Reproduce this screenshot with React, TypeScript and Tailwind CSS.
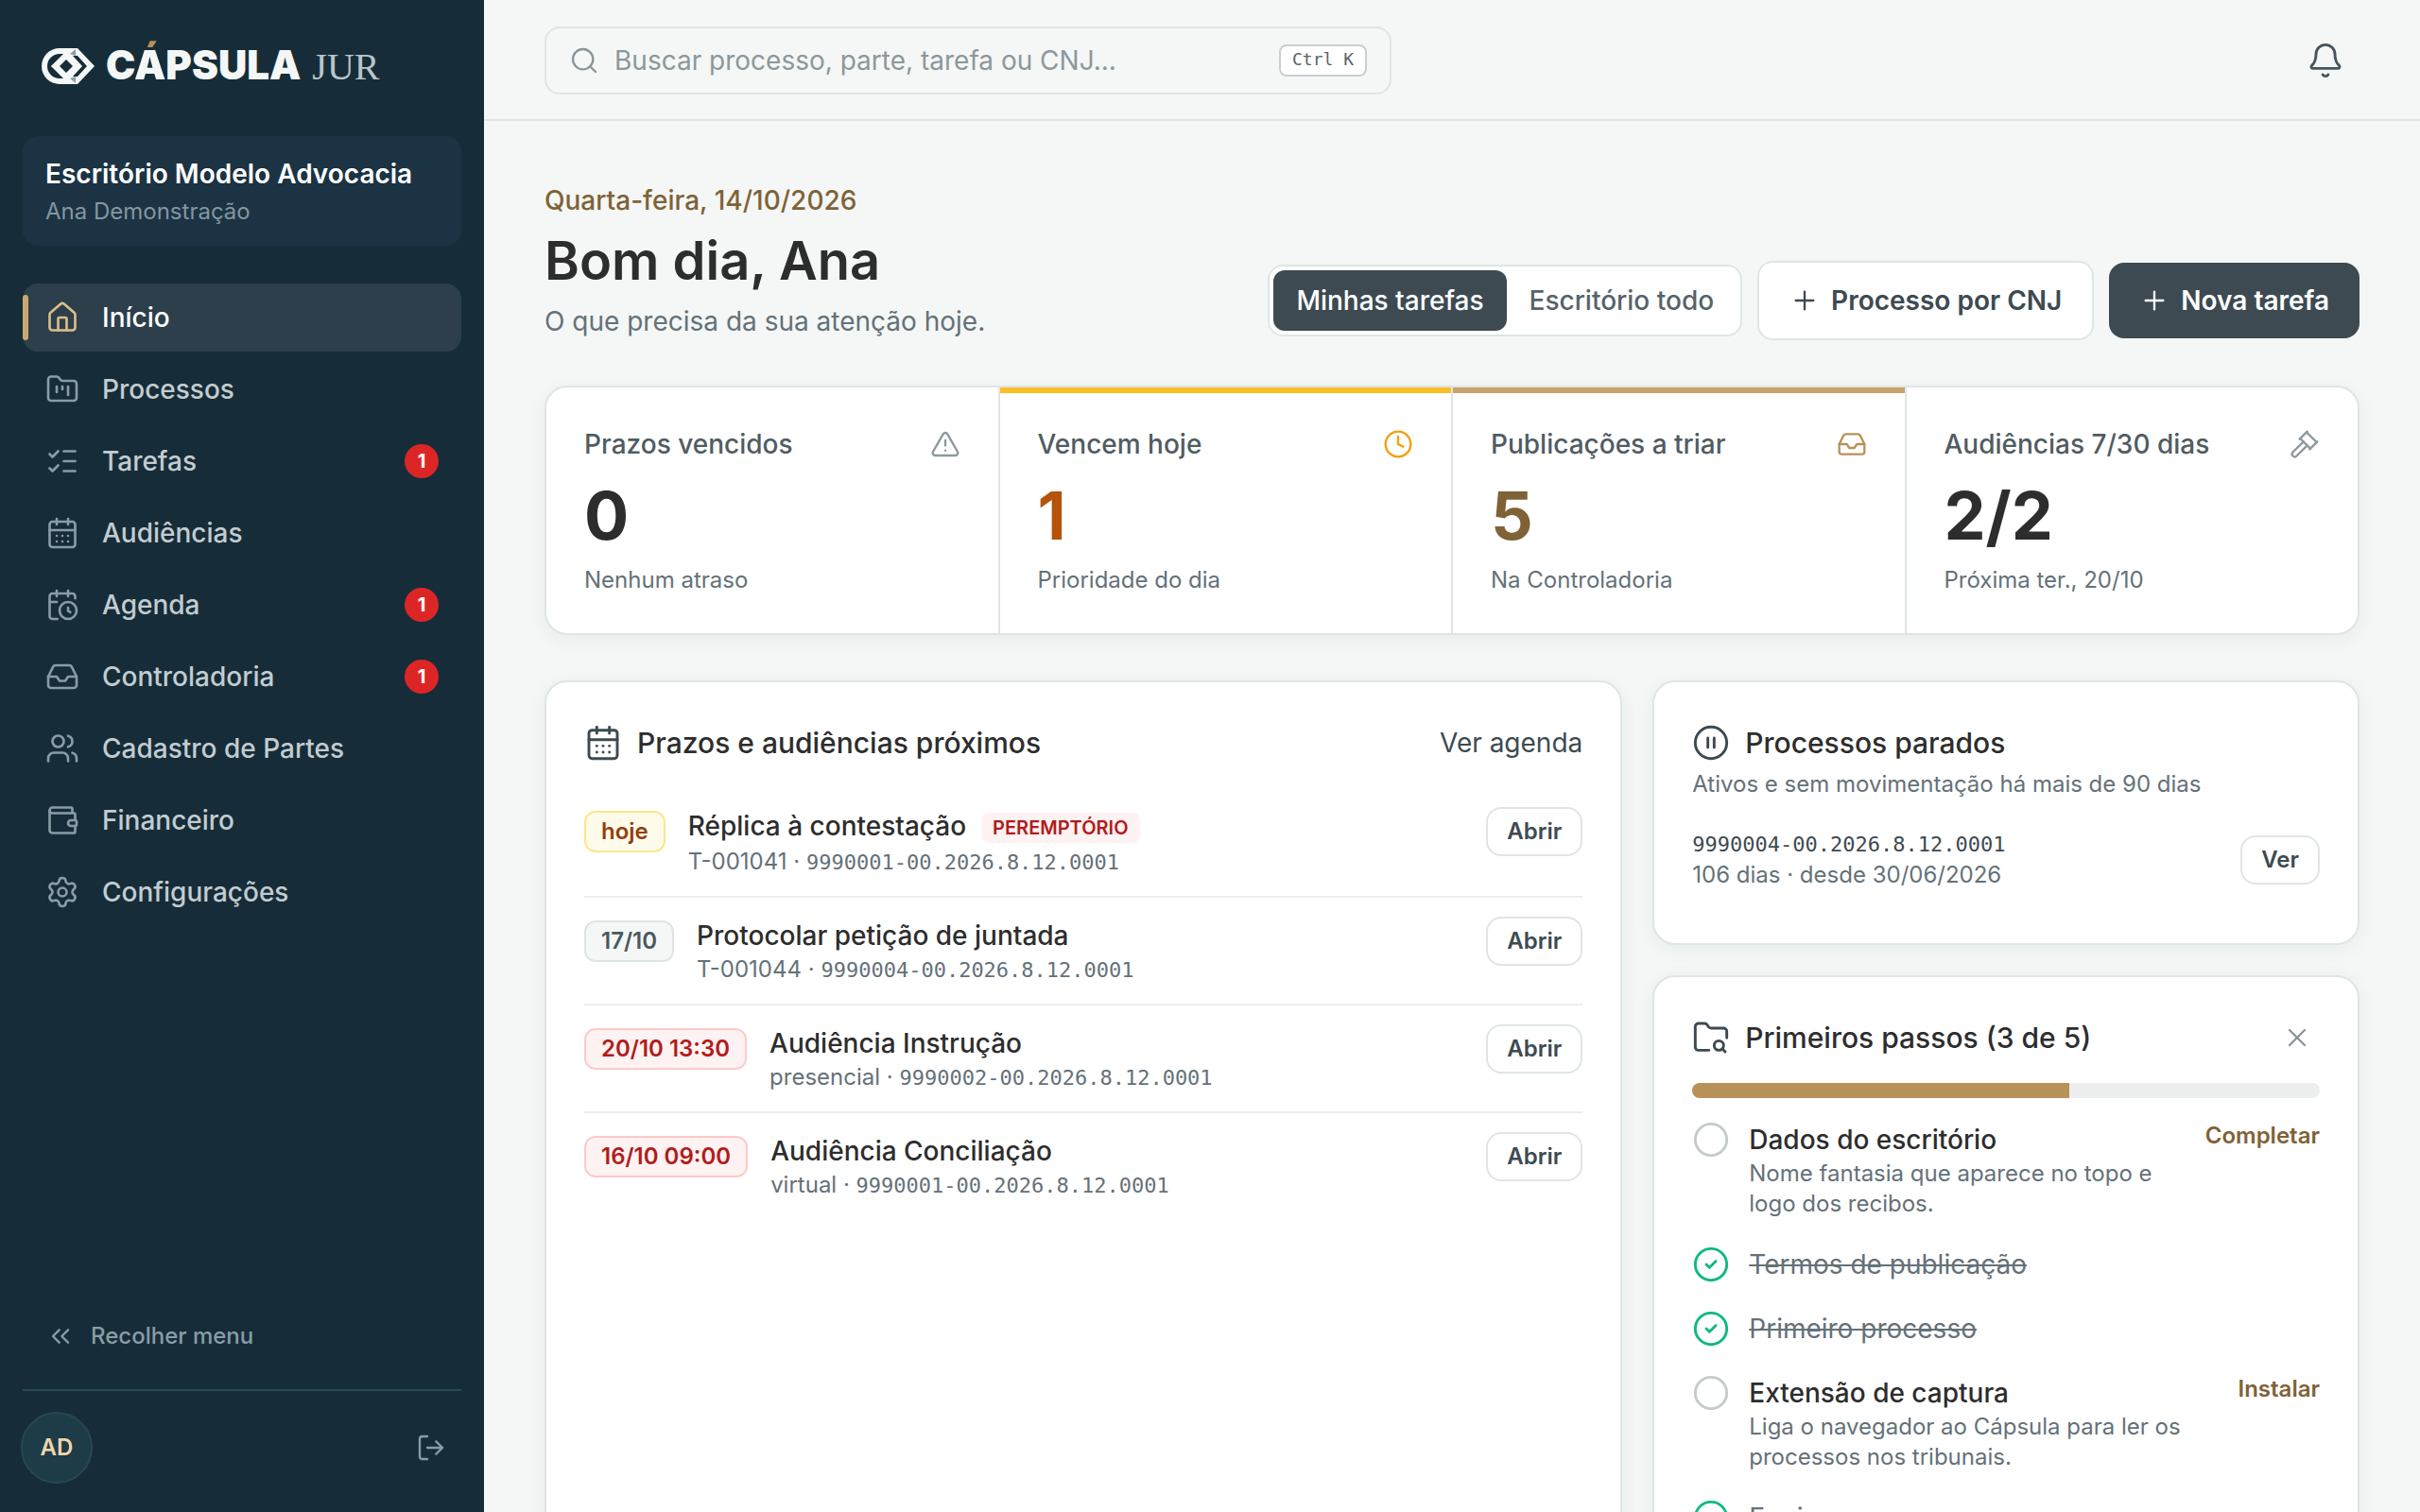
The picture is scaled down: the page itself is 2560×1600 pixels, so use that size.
import type { ReactNode } from "react";
import {
  Bell,
  CalendarClock,
  CalendarDays,
  ChevronsLeft,
  Circle,
  CircleCheck,
  CirclePause,
  Clock,
  FolderKanban,
  FolderSearch,
  Gavel,
  House,
  Inbox,
  ListChecks,
  LogOut,
  Plus,
  Search,
  Settings,
  TriangleAlert,
  Users,
  Wallet,
  X,
  type LucideIcon,
} from "lucide-react";

type NavEntry = { label: string; icon: LucideIcon; badge?: number; active?: boolean };

const NAV: NavEntry[] = [
  { label: "Início", icon: House, active: true },
  { label: "Processos", icon: FolderKanban },
  { label: "Tarefas", icon: ListChecks, badge: 1 },
  { label: "Audiências", icon: CalendarDays },
  { label: "Agenda", icon: CalendarClock, badge: 1 },
  { label: "Controladoria", icon: Inbox, badge: 1 },
  { label: "Cadastro de Partes", icon: Users },
  { label: "Financeiro", icon: Wallet },
  { label: "Configurações", icon: Settings },
];

const STATS = [
  { label: "Prazos vencidos", value: "0", note: "Nenhum atraso", icon: TriangleAlert, valueClass: "text-[#2d2d2d]", iconClass: "text-[#8d989c]", bar: "" },
  { label: "Vencem hoje", value: "1", note: "Prioridade do dia", icon: Clock, valueClass: "text-[#b45309]", iconClass: "text-[#f59e0b]", bar: "bg-[#f9bf24]" },
  { label: "Publicações a triar", value: "5", note: "Na Controladoria", icon: Inbox, valueClass: "text-[#806237]", iconClass: "text-[#b89158]", bar: "bg-[#c8a26d]" },
  { label: "Audiências 7/30 dias", value: "2/2", note: "Próxima ter., 20/10", icon: Gavel, valueClass: "text-[#2d2d2d]", iconClass: "text-[#8d989c]", bar: "" },
];

const DEADLINES = [
  { when: "hoje", tone: "border-[#fde68a] bg-[#fffbeb] text-[#92400e]", title: "Réplica à contestação", tag: "PEREMPTÓRIO", kind: "T-001041", number: "9990001-00.2026.8.12.0001" },
  { when: "17/10", tone: "border-[#dde4e4] bg-[#f4f7f6] text-[#4a585f]", title: "Protocolar petição de juntada", kind: "T-001044", number: "9990004-00.2026.8.12.0001" },
  { when: "20/10 13:30", tone: "border-[#fecaca] bg-[#fef2f2] text-[#b01c1c]", title: "Audiência Instrução", kind: "presencial", number: "9990002-00.2026.8.12.0001" },
  { when: "16/10 09:00", tone: "border-[#fecaca] bg-[#fef2f2] text-[#b01c1c]", title: "Audiência Conciliação", kind: "virtual", number: "9990001-00.2026.8.12.0001" },
];

const STEPS = [
  { title: "Dados do escritório", text: "Nome fantasia que aparece no topo e logo dos recibos.", action: "Completar" },
  { title: "Termos de publicação", done: true },
  { title: "Primeiro processo", done: true },
  { title: "Extensão de captura", text: "Liga o navegador ao Cápsula para ler os processos nos tribunais.", action: "Instalar" },
  { title: "Equipe", done: true },
];

const MONO = "font-['DejaVu_Sans_Mono',monospace]";

function Logo() {
  return (
    <div className="flex h-14 items-center px-5">
      <svg viewBox="0 0 56 38" className="h-[38px] w-14 shrink-0" aria-hidden="true">
        <path d="M38 0H19a19 19 0 0 0 0 38h19l18-19z" fill="#f4f7f6" />
        <path d="M27 6h-8a13 13 0 0 0 0 26h8L23 28 10 19 23 10z" fill="#162d39" />
        <path d="M26 3 10 19l16 16 16-16z" fill="#f4f7f6" />
        <path d="M26 12l-7 7 7 7 7-7z" fill="#162d39" />
        <path d="M33 8h5l10 11-10 11h-5l10-11z" fill="#162d39" />
        <path d="M36 1v7l-6-2zM36 37v-7l-6 2z" fill="#8d9ca4" />
      </svg>
      <span className="ml-3 flex items-baseline">
        <span className="text-[42px] leading-[56px] font-black text-[#f4f7f6]">
          C
          <span className="bg-[linear-gradient(#b89158_0_10px,#f4f7f6_10px)] bg-clip-text text-transparent">Á</span>
          PSULA
        </span>
        <span className="ml-3 font-['Liberation_Serif',serif] text-[40px] leading-[56px] text-[#b9c5ca]">JUR</span>
      </span>
    </div>
  );
}

function Sidebar() {
  return (
    <aside className="flex w-[512px] shrink-0 flex-col bg-[#162d39] px-6 pb-[30px]">
      <div className="flex h-36 items-start pt-[42px]">
        <Logo />
      </div>
      <div className="rounded-2xl bg-[#1b3343] px-6 py-5">
        <p className="text-[28px] leading-10 font-semibold text-white">Escritório Modelo Advocacia</p>
        <p className="mt-1 text-2xl text-[#8496a0]">Ana Demonstração</p>
      </div>
      <nav className="mt-10 flex flex-col gap-1">
        {NAV.map(({ label, icon: Icon, badge, active }) => (
          <a
            key={label}
            href="#"
            className={
              active
                ? "relative flex h-[72px] items-center gap-6 rounded-2xl bg-[#2c3f4b] px-6 text-white"
                : "relative flex h-[72px] items-center gap-6 rounded-2xl px-6 text-[#c3ccd0]"
            }
          >
            {active && <span className="absolute inset-y-3 left-0 w-1.5 rounded-sm bg-[#cba870]" />}
            <Icon size={36} strokeWidth={1.75} className={active ? "text-[#dcbf8a]" : "text-[#8a9ca5]"} />
            <span className="text-[28px] leading-10 font-medium">{label}</span>
            {badge && (
              <span className="ml-auto flex size-9 items-center justify-center rounded-full bg-[#dc2626] text-xl font-bold text-white">
                {badge}
              </span>
            )}
          </a>
        ))}
      </nav>
      <button type="button" className="mt-auto flex h-16 items-center gap-4 px-6 text-2xl font-medium text-[#8a9ca5]">
        <ChevronsLeft size={32} strokeWidth={1.75} />
        Recolher menu
      </button>
      <div className="mt-6 flex items-center justify-between border-t-2 border-[#284955] pt-[22px] pr-4">
        <span className="-ml-0.5 flex size-[76px] items-center justify-center rounded-full border-2 border-[#284752] bg-[#1e3b48] text-2xl font-semibold text-[#efd6ac]">
          AD
        </span>
        <button type="button" aria-label="Sair" className="text-[#8a9ca5]">
          <LogOut size={32} strokeWidth={1.75} />
        </button>
      </div>
    </aside>
  );
}

function TopBar() {
  return (
    <header className="flex h-32 shrink-0 items-center justify-between border-b-2 border-[#dfe4e4] px-16 pt-0.5">
      <label className="flex h-[72px] w-[896px] items-center gap-4 rounded-2xl border-2 border-[#dfe4e4] px-6">
        <Search size={32} strokeWidth={1.75} className="shrink-0 text-[#8a959a]" />
        <input
          type="search"
          aria-label="Buscar"
          placeholder="Buscar processo, parte, tarefa ou CNJ..."
          className="min-w-0 flex-1 bg-transparent text-[28px] leading-10 outline-none placeholder:text-[#8d979b]"
        />
        <kbd className={`rounded-lg border-2 border-[#c9cfd0] bg-white px-3 pb-0.5 text-lg text-[#56636a] ${MONO}`}>Ctrl K</kbd>
      </label>
      <button type="button" aria-label="Notificações" className="mr-4 text-[#46545c]">
        <Bell size={40} strokeWidth={1.75} />
      </button>
    </header>
  );
}

function Card({ className = "", children }: { className?: string; children: ReactNode }) {
  return (
    <section className={`rounded-3xl border-2 border-[#dfe5e5] bg-white p-10 shadow-[0_4px_20px_rgba(22,45,57,0.06)] ${className}`}>
      {children}
    </section>
  );
}

function CardTitle({ icon: Icon, children }: { icon: LucideIcon; children: ReactNode }) {
  return (
    <h2 className="flex items-center gap-4 text-[30px] leading-[48px] font-medium text-[#2d2d2d]">
      <Icon size={40} strokeWidth={1.75} className="text-[#3d4a52]" />
      {children}
    </h2>
  );
}

function SmallButton({ children }: { children: ReactNode }) {
  return (
    <button type="button" className="h-[52px] shrink-0 rounded-2xl border-2 border-[#dfe5e5] bg-white px-5 text-2xl font-semibold text-[#3d4a52]">
      {children}
    </button>
  );
}

function Greeting() {
  return (
    <div className="flex items-end justify-between">
      <div>
        <p className="text-[28px] leading-10 font-medium text-[#806237]">Quarta-feira, 14/10/2026</p>
        <h1 className="mt-2 text-[56px] leading-[72px] font-semibold text-[#2d2d2d]">Bom dia, Ana</h1>
        <p className="mt-2 text-[28px] leading-10 text-[#647179]">O que precisa da sua atenção hoje.</p>
      </div>
      <div className="flex items-center gap-4 text-[28px] leading-10">
        <div className="flex rounded-2xl border-2 border-[#dfe5e5] bg-white p-1">
          <button type="button" aria-pressed="true" className="h-16 rounded-xl bg-[#3d4a52] px-6 font-medium text-white">
            Minhas tarefas
          </button>
          <button type="button" aria-pressed="false" className="h-16 rounded-xl px-6 font-medium text-[#56636a]">
            Escritório todo
          </button>
        </div>
        <button type="button" className="flex h-[84px] items-center gap-3 rounded-2xl border-2 border-[#dfe5e5] bg-white px-8 font-semibold text-[#3d4a52]">
          <Plus size={32} strokeWidth={1.75} />
          Processo por CNJ
        </button>
        <button type="button" className="flex h-20 items-center gap-3 rounded-2xl bg-[#3d4a52] px-8 font-semibold text-white">
          <Plus size={32} strokeWidth={1.75} />
          Nova tarefa
        </button>
      </div>
    </div>
  );
}

function Stats() {
  return (
    <div className="mt-12 grid grid-cols-4 gap-0.5 overflow-hidden rounded-3xl border-2 border-[#dfe5e5] bg-[#dfe5e5] shadow-[0_4px_20px_rgba(22,45,57,0.06)]">
      {STATS.map(({ label, value, note, icon: Icon, valueClass, iconClass, bar }) => (
        <div key={label} className="relative bg-white p-10">
          {bar && <span className={`absolute inset-x-0 top-0 h-1.5 ${bar}`} />}
          <div className="flex items-center justify-between text-[28px] leading-10 font-medium text-[#505c63]">
            {label}
            <Icon size={32} strokeWidth={1.75} className={iconClass} />
          </div>
          <p className={`mt-5 text-[70px] leading-[72px] font-bold ${valueClass}`}>{value}</p>
          <p className="mt-4 text-2xl text-[#647179]">{note}</p>
        </div>
      ))}
    </div>
  );
}

function Deadlines() {
  return (
    <Card>
      <div className="mb-6 flex items-center justify-between">
        <CardTitle icon={CalendarDays}>Prazos e audiências próximos</CardTitle>
        <a href="#" className="text-[28px] leading-10 text-[#3d4a52]">Ver agenda</a>
      </div>
      <ul className="divide-y-2 divide-[#ebeeee]">
        {DEADLINES.map((d) => (
          <li key={d.when} className="flex items-start gap-6 py-5">
            <span className={`mt-1 h-11 shrink-0 rounded-xl border-2 px-4 text-2xl leading-10 font-semibold ${d.tone}`}>{d.when}</span>
            <div className="min-w-0 flex-1">
              <div className="flex items-start gap-4">
                <h3 className="text-[28px] leading-10 font-medium text-[#2d2d2d]">{d.title}</h3>
                {d.tag && (
                  <span className="mt-1.5 mb-1 rounded-lg bg-[#fef2f2] px-3 text-xl leading-8 font-semibold text-[#b01c1c]">{d.tag}</span>
                )}
              </div>
              <p className="text-2xl text-[#647179]">
                {d.kind} · <span className={`text-[22px] ${MONO}`}>{d.number}</span>
              </p>
            </div>
            <SmallButton>Abrir</SmallButton>
          </li>
        ))}
      </ul>
    </Card>
  );
}

function StalledCases() {
  return (
    <Card>
      <CardTitle icon={CirclePause}>Processos parados</CardTitle>
      <p className="mt-1 text-2xl text-[#647179]">Ativos e sem movimentação há mais de 90 dias</p>
      <div className="mt-4 flex items-center justify-between py-4">
        <div>
          <p className={`text-[22px] leading-8 text-[#3d4a52] ${MONO}`}>9990004-00.2026.8.12.0001</p>
          <p className="text-2xl text-[#647179]">106 dias · desde 30/06/2026</p>
        </div>
        <SmallButton>Ver</SmallButton>
      </div>
    </Card>
  );
}

function FirstSteps() {
  return (
    <Card>
      <div className="flex items-center justify-between">
        <CardTitle icon={FolderSearch}>Primeiros passos (3 de 5)</CardTitle>
        <button type="button" aria-label="Fechar" className="flex size-12 items-center justify-center text-[#8a959a]">
          <X size={32} strokeWidth={1.75} />
        </button>
      </div>
      <div className="mt-6 h-4 overflow-hidden rounded-full bg-[#ebeeed]">
        <div className="h-full w-3/5 bg-[#b89158]" />
      </div>
      <ul className="mt-6 flex flex-col gap-7">
        {STEPS.map((s) => (
          <li key={s.title} className="flex items-start gap-5">
            {s.done ? (
              <CircleCheck size={40} strokeWidth={1.75} className="shrink-0 text-[#10b981]" />
            ) : (
              <Circle size={40} strokeWidth={1.75} className="shrink-0 text-[#c5cbcc]" />
            )}
            <div className="min-w-0 flex-1">
              <h3
                className={
                  s.done
                    ? "text-[28px] leading-10 text-[#647179] line-through"
                    : "text-[28px] leading-10 font-medium text-[#2d2d2d]"
                }
              >
                {s.title}
              </h3>
              {s.text && <p className="text-2xl text-[#647179]">{s.text}</p>}
            </div>
            {s.action && (
              <a href="#" className="text-2xl font-semibold text-[#806237]">{s.action}</a>
            )}
          </li>
        ))}
      </ul>
    </Card>
  );
}

export default function App() {
  return (
    <div className="flex h-screen overflow-hidden bg-[#f4f7f6] font-[Inter,sans-serif]">
      <Sidebar />
      <div className="flex min-w-0 flex-1 flex-col">
        <TopBar />
        <main className="min-h-0 flex-1 overflow-hidden px-16 pt-16">
          <Greeting />
          <Stats />
          <div className="mt-12 grid grid-cols-[61fr_40fr] gap-8">
            <Deadlines />
            <div className="flex flex-col gap-8">
              <StalledCases />
              <FirstSteps />
            </div>
          </div>
        </main>
      </div>
    </div>
  );
}
